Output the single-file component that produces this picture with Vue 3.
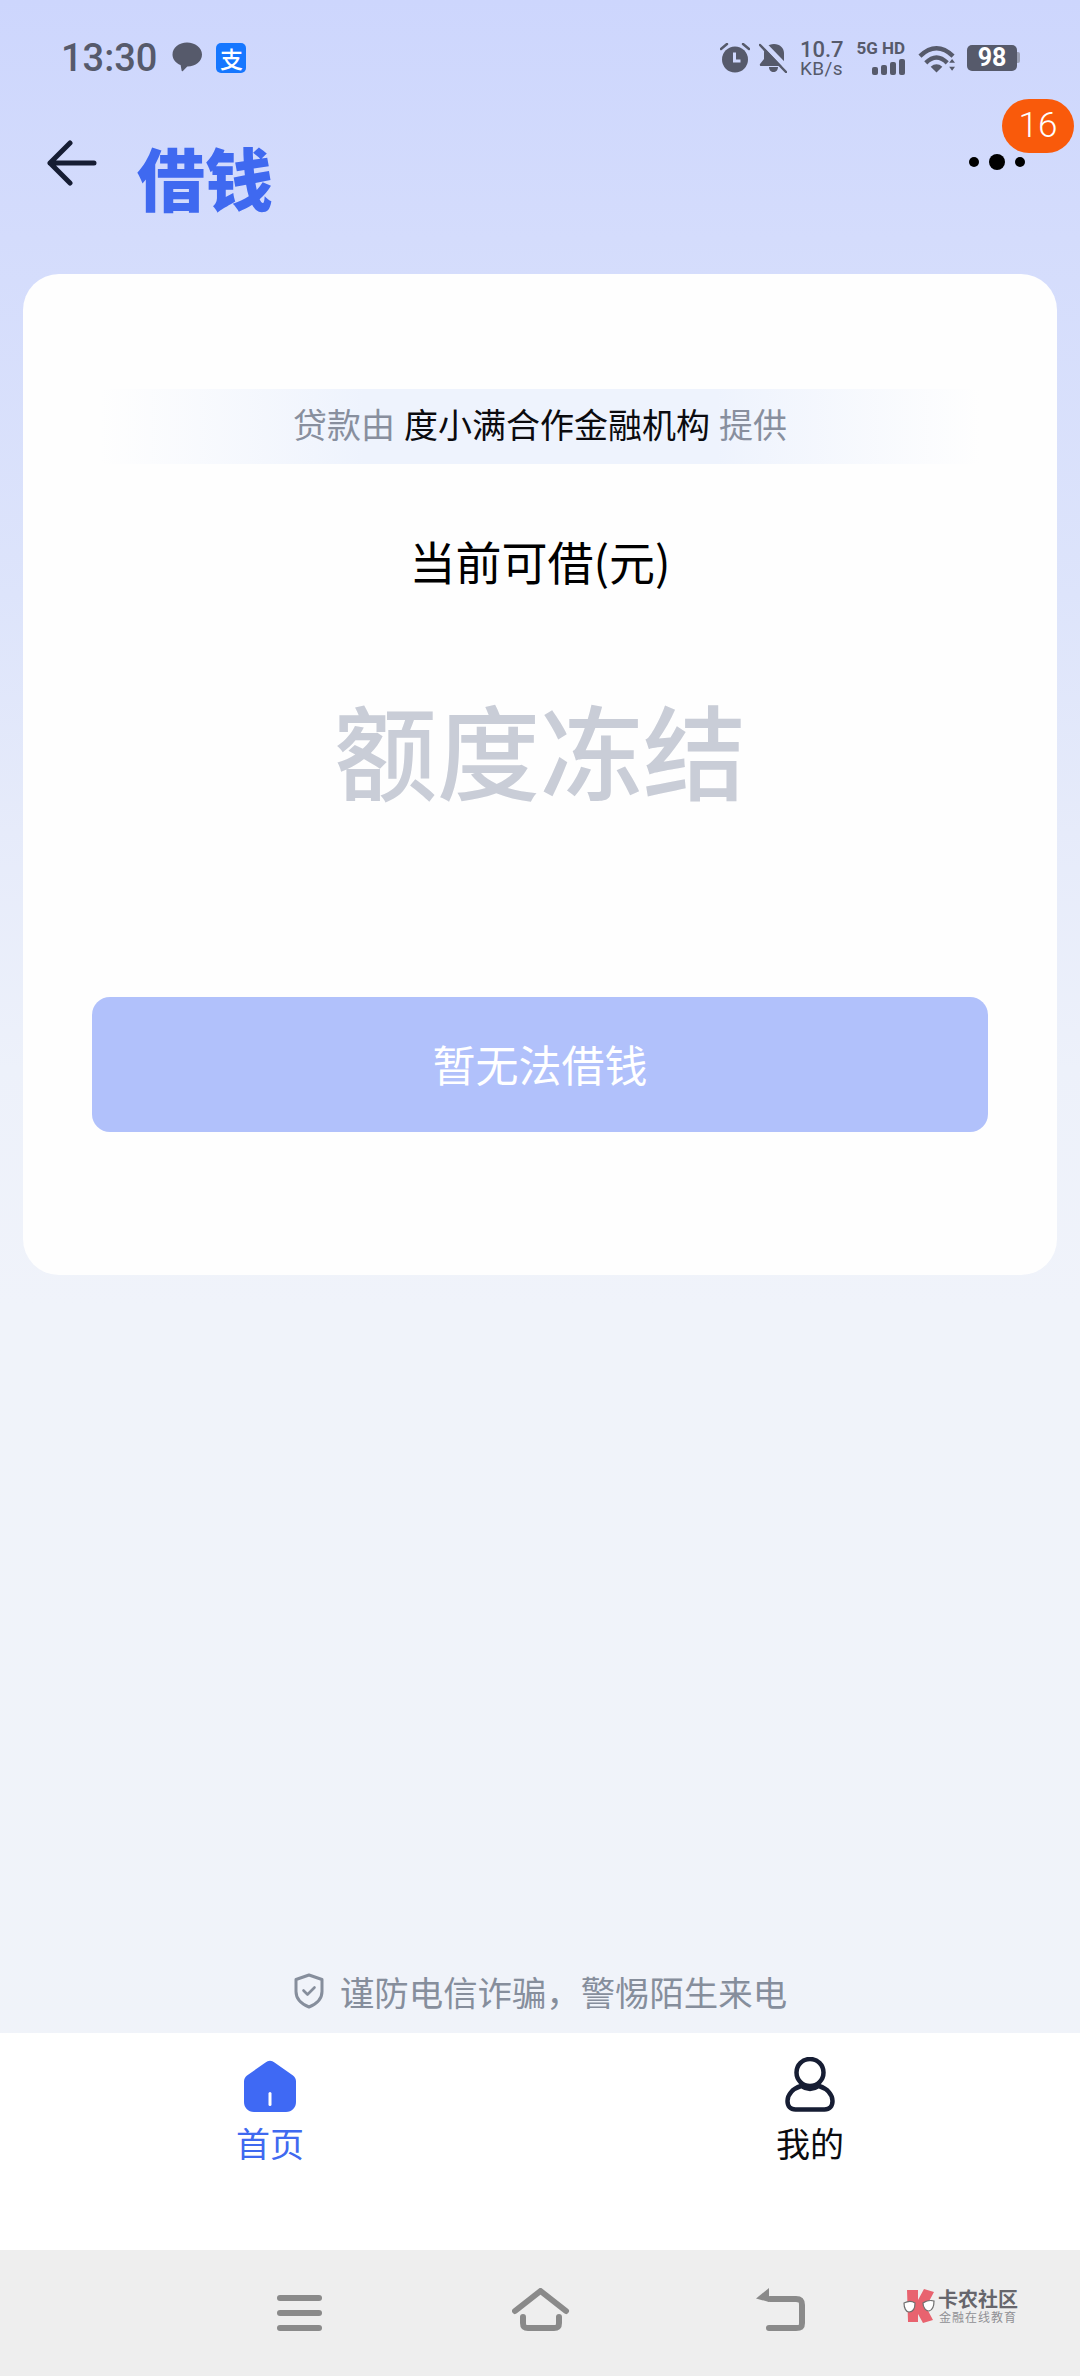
<script setup>
const wifiArcs = [
  'M2 13 Q19 -3 36 13',
  'M8 20 Q19 9 30 20'
]
</script>

<template>
  <div class="page">
    <div class="status">
      <div class="status-left">
        <span class="time">13:30</span>
        <svg class="msg" viewBox="0 0 30 30" width="30" height="30"><path d="M15 0.5C6.9 0.5 0.5 5.9 0.5 12.5c0 4.3 2.6 7.8 6.6 9.9l1.500 0.700 1 5.400c0.100 0.800 0.800 0.900 1.300 0.400l4.400-4.500h0.200c8.100 0 14.500-5.400 14.500-12S23.100 0.500 15 0.500z" fill="#565a6b"/></svg>
        <span class="ali">支</span>
      </div>
      <div class="status-right">
        <svg class="st-alarm" viewBox="0 0 30 30" width="30" height="30"><circle cx="15" cy="16.500" r="13" fill="#565a6b"/><path d="M14.500 9.500v8.500h6" fill="none" stroke="#cfd8fd" stroke-width="3"/><path d="M1 6l6-5M29 6l-6-5" stroke="#565a6b" stroke-width="2.500" stroke-linecap="round"/></svg>
        <svg class="st-bell" viewBox="0 0 28 30" width="28" height="30"><path d="M15 1c-6 0-10 4-10 9v6l-4 5c-.5.800 0 2 1 2h23c1 0 1.500-1.200 1-2l-1-2V10c0-5-4-9-10-9z" fill="#565a6b"/><path d="M10 24h9c0 3-2 5-4.500 5S10 27 10 24z" fill="#565a6b"/><path d="M4 0l25 26" stroke="#cfd8fd" stroke-width="5"/><path d="M1 2l26 27" stroke="#565a6b" stroke-width="2.500" stroke-linecap="round"/></svg>
        <div class="speed"><span class="sp-num">10.7</span><span class="sp-unit">KB/s</span></div>
        <div class="signal">
          <span class="hd">5G HD</span>
          <div class="bars"><i class="b1"></i><i class="b2"></i><i class="b3"></i><i class="b4"></i></div>
        </div>
        <svg class="st-wifi" viewBox="0 0 38 30" width="37" height="30">
          <path v-for="a in wifiArcs" :key="a" :d="a" fill="none" stroke="#565a6b" stroke-width="4.500"/>
          <path d="M13 24Q19 19 25 24L19 30z" fill="#565a6b"/>
          <path d="M32 20l3-4 3 4zM32 24h6l-3 4z" fill="#565a6b"/>
        </svg>
        <div class="battery"><span class="bat-body">98</span><i class="bat-tip"></i></div>
      </div>
    </div>

    <div class="header">
      <svg class="back" viewBox="0 0 50 46" width="50" height="46"><path d="M3 23h44M23 3L3 23l20 20" fill="none" stroke="#161d33" stroke-width="5" stroke-linecap="round" stroke-linejoin="round"/></svg>
      <span class="title">借钱</span>
      <div class="more">
        <i class="dot"></i><i class="dot big"></i><i class="dot"></i>
        <span class="badge">16</span>
      </div>
    </div>

    <div class="card">
      <div class="provider">贷款由<b>度小满合作金融机构</b>提供</div>
      <div class="label">当前可借(元)</div>
      <div class="frozen">额度冻结</div>
      <div class="btn">暂无法借钱</div>
    </div>

    <div class="spacer"></div>

    <div class="notice">
      <svg viewBox="0 0 32 36" width="32" height="36"><path d="M16 2l13 4.500v12c0 7-5.500 12.500-13 15.500C8.500 31 3 25.500 3 18.500v-12z" fill="none" stroke="#868e9c" stroke-width="3" stroke-linejoin="round"/><path d="M10.500 17.500l4 4 7-7" fill="none" stroke="#868e9c" stroke-width="2.600" stroke-linecap="round" stroke-linejoin="round"/></svg>
      <span>谨防电信诈骗，警惕陌生来电</span>
    </div>

    <div class="tabbar">
      <div class="tab active">
        <div class="tab-icon"><svg viewBox="0 0 52 52" width="52" height="52"><path d="M21.500 2.500a7 7 0 0 1 9 0L49 15.500c2 1.500 3 3.500 3 6V42c0 5.500-4 10-10 10H10C4 52 0 47.500 0 42V21.500c0-2.500 1-4.500 3-6z" fill="#3f69f4"/><rect x="24.500" y="32" width="3" height="14" rx="1.500" fill="#fff"/></svg></div>
        <span>首页</span>
      </div>
      <div class="tab">
        <div class="tab-icon"><svg viewBox="0 0 50 55" width="50" height="55"><ellipse cx="25" cy="15.500" rx="13.500" ry="13.500" fill="none" stroke="#161d33" stroke-width="4.500"/><path d="M16 29C7 32 2.500 38 2.500 44c0 5.500 3 8.500 8 8.500h29c5 0 8-3 8-8.500 0-6-4.500-12-13.500-15-3 2-5.500 3-9 3s-6-1-9-3z" fill="none" stroke="#161d33" stroke-width="4.500" stroke-linejoin="round"/></svg></div>
        <span>我的</span>
      </div>
    </div>

    <div class="navbar">
      <div class="burger"><i></i><i></i><i></i></div>
      <svg class="nav-home" viewBox="0 0 58 44" width="58" height="44"><path d="M3 23L28.500 3 54 23" fill="none" stroke="#8a8a8a" stroke-width="6" stroke-linecap="round" stroke-linejoin="round"/><path d="M11 29v6c0 4 2 5 5 5h26c3 0 5-1 5-5v-6" fill="none" stroke="#8a8a8a" stroke-width="6" stroke-linecap="round"/></svg>
      <svg class="nav-back" viewBox="0 0 50 44" width="50" height="44"><path d="M14 11h26c5 0 6 2 6 6v18c0 4-1 5-6 5H13" fill="none" stroke="#8a8a8a" stroke-width="6" stroke-linecap="round"/><path d="M0 10.500L13 0v14z" fill="#8a8a8a"/></svg>
      <div class="mark">
        <svg viewBox="0 0 33 36" width="33" height="36"><path d="M5 2h11v32H6z" fill="#e8636f"/><path d="M16 12l6-11 10 3-8 15 7 13-10 3-5-9z" fill="#e8636f"/><path d="M2 15c4-2 8-2 11 0 0 5-2 9-6 9-3 0-5-4-5-9zM21 15c3-2 8-3 11-2 0 5-1 9-5 10-3 0-6-3-6-8z" fill="#fff" stroke="#6f6f6f" stroke-width="1.200"/></svg>
        <div class="mark-text"><span class="mk1">卡农社区</span><span class="mk2">金融在线教育</span></div>
      </div>
    </div>
  </div>
</template>

<style scoped>
.page {
  width: 1080px;
  height: 2376px;
  overflow: hidden;
  display: flex;
  flex-direction: column;
  background: linear-gradient(180deg, #cdd6fd 0%, #d4dcfc 10%, #dde4fb 25%, #e6ebfa 35%, #edf1fa 45%, #f0f3fa 55%, #f0f3f9 100%);
  font-family: "Noto Sans CJK SC", "Noto Sans", sans-serif;
}
.status {
  height: 115px;
  flex: none;
  display: flex;
  align-items: center;
  justify-content: space-between;
  padding: 0 60px 0 61px;
  color: #565a6b;
}
.status-left { display: flex; align-items: center; gap: 15px; }
.time { font-family: Roboto, sans-serif; font-size: 38px; font-weight: 500; }
.msg { margin-top: -1px; }
.ali {
  width: 30px; height: 30px; border-radius: 5px; background: #1677ff; color: #fff;
  font-size: 23px; line-height: 30px; text-align: center; font-weight: 500; margin-left: -1px;
}
.status-right { display: flex; align-items: center; }
.st-alarm { margin-right: 9px; }
.st-bell { margin-right: 13px; }
.speed { display: flex; flex-direction: column; font-family: Roboto, sans-serif; margin-right: 14px; width: 44px; white-space: nowrap; }
.sp-num { font-size: 22px; font-weight: 500; line-height: 21px; }
.sp-unit { font-size: 19px; line-height: 17px; letter-spacing: 0.4px; }
.signal { display: flex; flex-direction: column; align-items: flex-end; margin-right: 13px; width: 47px; }
.hd { font-family: Roboto, sans-serif; font-size: 17px; font-weight: 700; line-height: 16px; white-space: nowrap; }
.bars { display: flex; gap: 3px; align-items: flex-end; margin-top: 3px; height: 16px; }
.bars i { display: block; width: 6px; background: #565a6b; border-radius: 2px; }
.b1 { height: 8px; } .b2 { height: 10px; } .b3 { height: 13px; } .b4 { height: 16px; }
.st-wifi { margin-right: 12px; }
.battery { display: flex; align-items: center; }
.bat-body {
  width: 50px; height: 26px; border-radius: 5px; background: #565a6b; color: #fff;
  font-family: Roboto, sans-serif; font-weight: 700; font-size: 25px; line-height: 26px; text-align: center;
}
.bat-tip { display: block; width: 3px; height: 11px; background: #9ba1b6; border-radius: 0 2px 2px 0; }

.header {
  height: 159px;
  flex: none;
  display: flex;
  align-items: flex-start;
  padding-left: 47px;
  position: relative;
}
.back { margin-top: 25px; }
.title {
  font-size: 68px; font-weight: 900; color: #3f69f0; line-height: 80px;
  margin-left: 40px; margin-top: 22px;
}
.more {
  position: absolute; left: 969px; top: 39px;
  display: flex; align-items: center; gap: 10px; height: 16px;
}
.dot { display: block; width: 10px; height: 10px; border-radius: 50%; background: #000; }
.dot.big { width: 16px; height: 16px; }
.badge {
  position: absolute; left: 33px; top: -55px;
  width: 72px; height: 54px; border-radius: 27px;
  background: #f95a0b; color: #fff; font-family: Roboto, sans-serif; font-weight: 300;
  font-size: 35px; line-height: 54px; text-align: center;
}

.card {
  flex: none;
  margin: 0 23px;
  height: 1001px;
  box-sizing: border-box;
  background: #fefefe;
  border-radius: 36px;
  padding: 115px 69px 0;
  display: flex;
  flex-direction: column;
  align-items: stretch;
}
.provider {
  height: 75px;
  margin: 0 8px;
  padding-bottom: 6px;
  box-sizing: border-box;
  display: flex;
  align-items: center;
  justify-content: center;
  gap: 9px;
  font-size: 34px;
  color: #888f9e;
  background: linear-gradient(90deg, rgba(238,243,253,0) 0%, #eef3fd 30%, #eef3fd 70%, rgba(238,243,253,0) 100%);
}
.provider b { font-weight: 400; color: #0b0b0f; }
.label {
  margin-top: 63px;
  font-size: 46px;
  line-height: 66px;
  color: #000;
  text-align: center;
}
.frozen {
  margin-top: 86px;
  font-size: 103px;
  line-height: 140px;
  font-weight: 500;
  color: #c9cdd7;
  text-align: center;
}
.btn {
  margin-top: 178px;
  height: 135px;
  box-sizing: border-box;
  border-radius: 18px;
  background: #b1c1fb;
  color: #fff;
  font-size: 43px;
  line-height: 132px;
  text-align: center;
}

.spacer { flex: 1; }
.notice {
  flex: none;
  height: 58px;
  display: flex;
  align-items: center;
  justify-content: center;
  gap: 15px;
  font-size: 34.4px;
  color: #868e9c;
  padding-bottom: 13px;
}

.tabbar {
  flex: none;
  height: 217px;
  background: #fff;
  display: grid;
  grid-template-columns: 1fr 1fr;
  padding: 24px 0 0;
  box-sizing: border-box;
}
.tab {
  display: flex;
  flex-direction: column;
  align-items: center;
  font-size: 34px;
  line-height: 46px;
  color: #0b0b0f;
}
.tab-icon { height: 55px; display: flex; align-items: flex-end; }
.tab.active { color: #3f69f0; }
.tab span { margin-top: 8px; }

.navbar {
  flex: none;
  height: 126px;
  background: #eeeeee;
  display: flex;
  padding-top: 38px;
  box-sizing: border-box;
  align-items: flex-start;
}
.burger { margin-left: 277px; margin-top: 7px; width: 45px; display: flex; flex-direction: column; gap: 9px; }
.burger i { display: block; height: 6px; border-radius: 3px; background: #8a8a8a; }
.nav-home { margin-left: 190px; }
.nav-back { margin-left: 186px; }
.mark { display: flex; align-items: center; margin-left: 96px; gap: 3px; color: #666; }
.mark-text { display: flex; flex-direction: column; align-items: center; }
.mk1 { font-size: 20px; line-height: 22px; font-weight: 700; color: #66666c; }
.mk2 { font-size: 12px; line-height: 14px; color: #909094; letter-spacing: 1px; }
</style>
